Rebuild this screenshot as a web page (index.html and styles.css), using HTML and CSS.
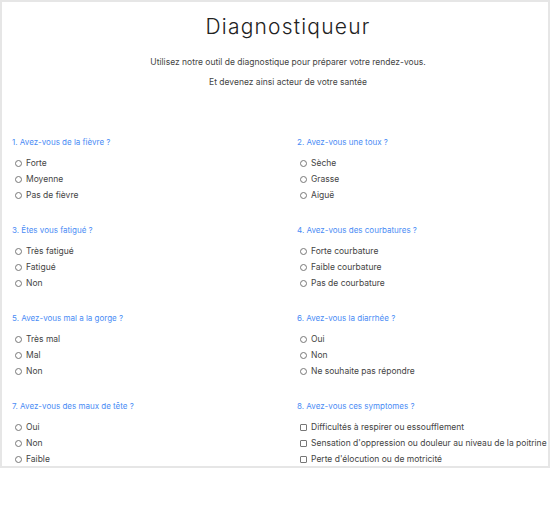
FILE: index.html
```html
<!DOCTYPE html>
<html lang="fr">
<head>
<meta charset="utf-8">
<title>Diagnostiqueur</title>
<link rel="stylesheet" href="styles.css">
</head>
<body>
<div class="card">
  <header class="intro">
    <h1 class="title">Diagnostiqueur</h1>
    <p class="lead">Utilisez notre outil de diagnostique pour préparer votre rendez-vous.</p>
    <p class="lead">Et devenez ainsi acteur de votre santée</p>
  </header>
  <form class="grid">
    <fieldset class="q">
      <legend class="q-title">1. Avez-vous de la fièvre ?</legend>
      <label class="opt"><input type="radio" name="q1"> Forte</label>
      <label class="opt"><input type="radio" name="q1"> Moyenne</label>
      <label class="opt"><input type="radio" name="q1"> Pas de fièvre</label>
    </fieldset>
    <fieldset class="q">
      <legend class="q-title">2. Avez-vous une toux ?</legend>
      <label class="opt"><input type="radio" name="q2"> Sèche</label>
      <label class="opt"><input type="radio" name="q2"> Grasse</label>
      <label class="opt"><input type="radio" name="q2"> Aiguë</label>
    </fieldset>
    <fieldset class="q">
      <legend class="q-title">3. Êtes vous fatigué ?</legend>
      <label class="opt"><input type="radio" name="q3"> Très fatigué</label>
      <label class="opt"><input type="radio" name="q3"> Fatigué</label>
      <label class="opt"><input type="radio" name="q3"> Non</label>
    </fieldset>
    <fieldset class="q">
      <legend class="q-title">4. Avez-vous des courbatures ?</legend>
      <label class="opt"><input type="radio" name="q4"> Forte courbature</label>
      <label class="opt"><input type="radio" name="q4"> Faible courbature</label>
      <label class="opt"><input type="radio" name="q4"> Pas de courbature</label>
    </fieldset>
    <fieldset class="q">
      <legend class="q-title">5. Avez-vous mal a la gorge ?</legend>
      <label class="opt"><input type="radio" name="q5"> Très mal</label>
      <label class="opt"><input type="radio" name="q5"> Mal</label>
      <label class="opt"><input type="radio" name="q5"> Non</label>
    </fieldset>
    <fieldset class="q">
      <legend class="q-title">6. Avez-vous la diarrhée ?</legend>
      <label class="opt"><input type="radio" name="q6"> Oui</label>
      <label class="opt"><input type="radio" name="q6"> Non</label>
      <label class="opt"><input type="radio" name="q6"> Ne souhaite pas répondre</label>
    </fieldset>
    <fieldset class="q">
      <legend class="q-title">7. Avez-vous des maux de tête ?</legend>
      <label class="opt"><input type="radio" name="q7"> Oui</label>
      <label class="opt"><input type="radio" name="q7"> Non</label>
      <label class="opt"><input type="radio" name="q7"> Faible</label>
    </fieldset>
    <fieldset class="q">
      <legend class="q-title">8. Avez-vous ces symptomes ?</legend>
      <label class="opt"><input type="checkbox" name="q8"> Difficultés à respirer ou essoufflement</label>
      <label class="opt"><input type="checkbox" name="q8"> Sensation d'oppression ou douleur au niveau de la poitrine</label>
      <label class="opt"><input type="checkbox" name="q8"> Perte d'élocution ou de motricité</label>
    </fieldset>
  </form>
</div>
</body>
</html>
```

FILE: styles.css
```css
* { box-sizing: border-box; }
html, body { margin: 0; padding: 0; background: #fff; }
body {
  font-family: Inter, "Open Sans", "Liberation Sans", sans-serif;
  color: #444;
}
.card {
  width: 550px;
  border: 2px solid #e6e6e6;
  background: #fff;
  overflow: hidden;
}
.intro {
  padding-left: 26px;
  padding-top: 10px;
  text-align: center;
}
.title {
  margin: 0 0 10px;
  font-size: 21px;
  letter-spacing: 1.2px;
  line-height: 30px;
  font-weight: 300;
  color: #222;
}
.lead {
  margin: 0;
  font-size: 8.5px;
  line-height: 20px;
  color: #444;
}
.grid {
  display: grid;
  grid-template-columns: 285px 1fr;
  row-gap: 16px;
  padding: 38px 0 0 10px;
  margin: 0;
}
.q {
  margin: 0;
  padding: 0;
  border: 0;
  min-width: 0;
  display: flex;
  flex-direction: column;
}
.q-title {
  padding: 0;
  float: left;
  width: 100%;
  font-size: 8px;
  line-height: 24px;
  color: #4a8cf5;
}
.opt {
  display: flex;
  align-items: center;
  gap: 4px;
  padding-left: 3px;
  font-size: 8.5px;
  line-height: 16px;
  color: #444;
  white-space: nowrap;
  position: relative;
  top: 1px;
}
.opt input {
  appearance: none;
  -webkit-appearance: none;
  margin: 0;
  width: 7px;
  height: 7px;
  border: 1px solid #777;
  border-radius: 50%;
  background: #fff;
  flex: none;
}
.opt input[type="checkbox"] {
  border-radius: 1px;
}
```
